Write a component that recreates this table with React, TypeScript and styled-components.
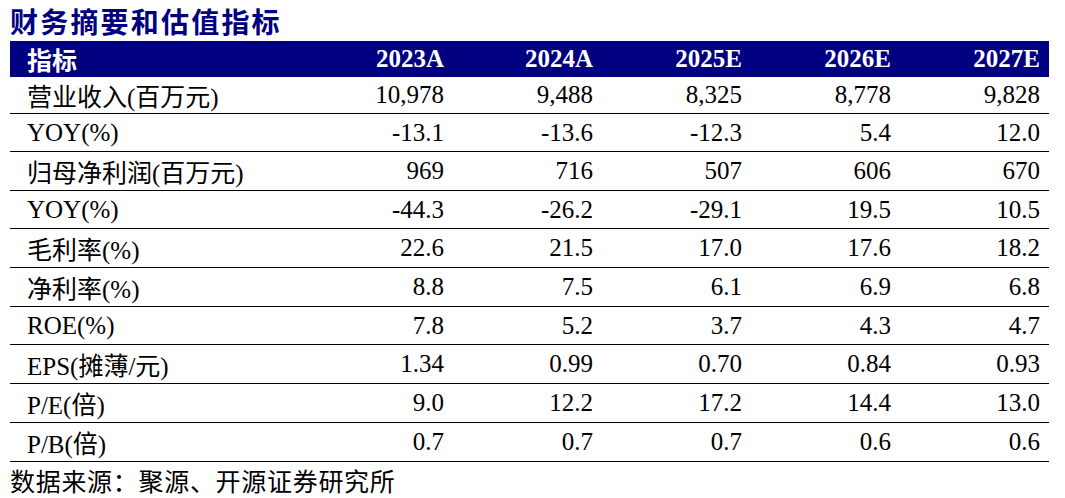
import React from "react";
import styled, { createGlobalStyle } from "styled-components";

const Global = createGlobalStyle`
  html, body { margin: 0; padding: 0; background: #fff; }
  body { font-family: "Liberation Serif", "Noto Sans CJK SC", serif; color: #000; }
`;

const Page = styled.div`
  width: 1065px;
  height: 498px;
  display: flex;
  flex-direction: column;
  padding-left: 10px;
  box-sizing: border-box;
`;

const Title = styled.div`
  height: 41px;
  display: flex;
  align-items: center;
  font-family: "Liberation Serif", "Noto Sans CJK SC", serif;
  font-weight: 700;
  font-size: 28px;
  letter-spacing: 2.2px;
  color: #000080;
  padding-top: 1px;
  box-sizing: border-box;
`;

const Table = styled.div`
  width: 1039px;
  display: flex;
  flex-direction: column;
`;

const Row = styled.div<{ $h: number; $head?: boolean }>`
  display: grid;
  grid-template-columns: 294px repeat(5, 149px);
  height: ${(p) => p.$h}px;
  box-sizing: border-box;
  background: ${(p) => (p.$head ? "#000080" : "transparent")};
  color: ${(p) => (p.$head ? "#fff" : "#000")};
  font-weight: ${(p) => (p.$head ? 700 : 400)};
  border-bottom: ${(p) => (p.$head ? "none" : "1px solid #000")};
  font-size: 25px;
`;

const Label = styled.div`
  display: flex;
  align-items: center;
  padding-left: 17px;
  white-space: nowrap;
`;

const Cell = styled.div`
  display: flex;
  align-items: center;
  justify-content: flex-end;
  padding-right: 9px;
`;

const Footer = styled.div`
  height: 36px;
  display: flex;
  align-items: center;
  font-size: 25px;
  letter-spacing: 0.7px;
  font-family: "Liberation Serif", "Noto Sans CJK SC", serif;
`;

const years = ["2023A", "2024A", "2025E", "2026E", "2027E"];

const rows: { label: string; values: string[]; h: number }[] = [
  { label: "营业收入(百万元)", values: ["10,978", "9,488", "8,325", "8,778", "9,828"], h: 37 },
  { label: "YOY(%)", values: ["-13.1", "-13.6", "-12.3", "5.4", "12.0"], h: 38 },
  { label: "归母净利润(百万元)", values: ["969", "716", "507", "606", "670"], h: 39 },
  { label: "YOY(%)", values: ["-44.3", "-26.2", "-29.1", "19.5", "10.5"], h: 38 },
  { label: "毛利率(%)", values: ["22.6", "21.5", "17.0", "17.6", "18.2"], h: 39 },
  { label: "净利率(%)", values: ["8.8", "7.5", "6.1", "6.9", "6.8"], h: 39 },
  { label: "ROE(%)", values: ["7.8", "5.2", "3.7", "4.3", "4.7"], h: 38 },
  { label: "EPS(摊薄/元)", values: ["1.34", "0.99", "0.70", "0.84", "0.93"], h: 39 },
  { label: "P/E(倍)", values: ["9.0", "12.2", "17.2", "14.4", "13.0"], h: 39 },
  { label: "P/B(倍)", values: ["0.7", "0.7", "0.7", "0.6", "0.6"], h: 39 },
];

export default function App() {
  return (
    <Page>
      <Global />
      <Title>财务摘要和估值指标</Title>
      <Table>
        <Row $h={36} $head>
          <Label>指标</Label>
          {years.map((y) => (
            <Cell key={y}>{y}</Cell>
          ))}
        </Row>
        {rows.map((r, i) => (
          <Row key={i} $h={r.h}>
            <Label>{r.label}</Label>
            {r.values.map((v, j) => (
              <Cell key={j}>{v}</Cell>
            ))}
          </Row>
        ))}
      </Table>
      <Footer>数据来源：聚源、开源证券研究所</Footer>
    </Page>
  );
}
